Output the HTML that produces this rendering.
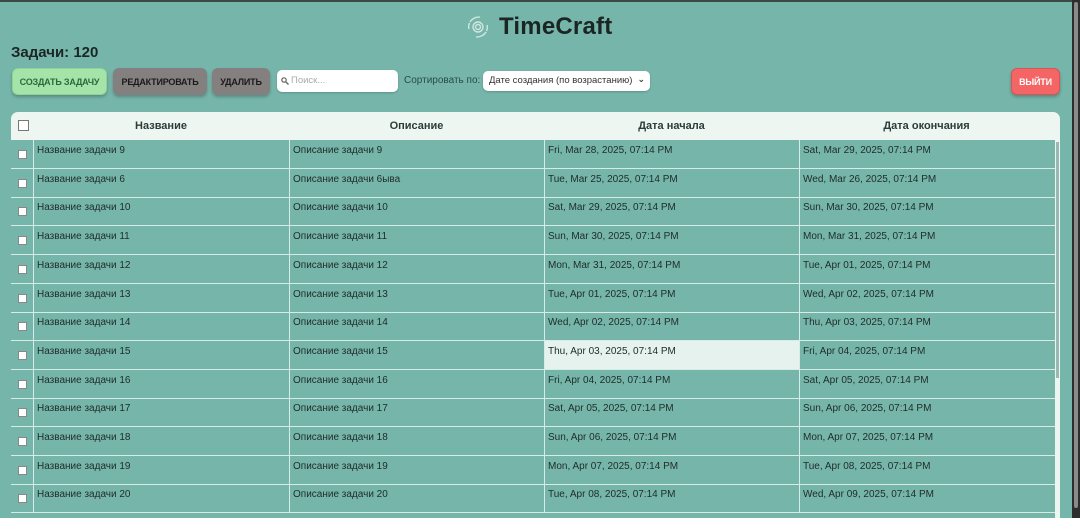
<!DOCTYPE html>
<html><head><meta charset="utf-8"><style>
*{box-sizing:border-box;margin:0;padding:0}
body{width:1080px;height:518px;overflow:hidden;background:#76b6aa;font-family:"Liberation Sans","DejaVu Sans",sans-serif;color:#1f2b29;position:relative}
.topbar{position:absolute;left:0;top:0;width:1080px;height:2px;background:#3a4a47}
.rbar{position:absolute;left:1072px;top:0;width:8px;height:518px;background:#2d2d2d}
.rbar i{position:absolute;left:2px;top:2px;width:4px;height:506px;background:#8a8a8a;border-radius:2px}
.logo{position:absolute;left:465px;top:13px;display:flex;align-items:center}
.logo span{font-weight:bold;font-size:24px;color:#1b2624;margin-left:8px;letter-spacing:0.2px}
h1{position:absolute;left:11px;top:44px;font-size:15px;font-weight:bold;color:#1b2624}
.btn{position:absolute;top:68px;height:27px;border-radius:6px;font-size:9px;font-weight:bold;display:flex;align-items:center;justify-content:center;box-shadow:0 2px 3px rgba(0,0,0,.25);letter-spacing:-0.2px}
.search{position:absolute;left:277px;top:70px;width:121px;height:22px;background:#fff;border-radius:5px;font-size:9.5px;color:#aaa;padding-left:14px;line-height:22px;box-shadow:0 1px 2px rgba(0,0,0,.2)}
.lbl{position:absolute;left:404px;top:75px;font-size:10px;color:#2c4a45}
.sel{position:absolute;left:483px;top:71px;width:167px;height:20px;background:#fff;border-radius:5px;font-size:9.5px;color:#333;line-height:20px;padding-left:6px;box-shadow:0 1px 2px rgba(0,0,0,.2)}
.tw{position:absolute;left:11px;top:112px;width:1049px;height:406px}
.hd{position:absolute;left:0;top:0;width:1049px;height:28px;background:#eef6f2;border-radius:7px 7px 0 0}
.hd div{position:absolute;top:8px;font-size:11px;font-weight:bold;color:#2b3d3a;text-align:center}
.row{position:absolute;left:0;width:1044px;height:29px;border-bottom:1.5px solid #d6ece7}
.c{position:absolute;top:0;height:100%;border-left:1.5px solid #d6ece7;font-size:10px;padding:5px 0 0 3px;color:#1f2b29}
.cb{position:absolute;left:7px;top:10px;width:9px;height:9px;background:#fff;border:1px solid #888}
.sb{position:absolute;left:1044px;top:28px;width:5px;height:378px;background:#eef6f2}
.sb i{position:absolute;left:1px;top:2px;width:3px;height:236px;background:#9cb8b2}
</style></head><body>
<div class="topbar"></div>
<div class="rbar"><i></i></div>
<div class="logo"><svg width="26" height="26" viewBox="0 0 26 26" fill="none" stroke="#cfe6e0" stroke-width="1.4"><circle cx="13" cy="13" r="5"/><circle cx="13" cy="13" r="2.5"/><path d="M5 8 A10 10 0 0 1 15 3.2"/><path d="M21 18 A10 10 0 0 1 11 22.8"/><path d="M4 15 A9 9 0 0 1 4.5 9"/><path d="M22 11 A9 9 0 0 1 21.5 17"/></svg><span>TimeCraft</span></div>
<h1>Задачи: 120</h1>
<div class="btn" style="left:12px;width:95px;background:#a4e4a8;color:#2b6a3c;border:1px solid #8fd494">СОЗДАТЬ ЗАДАЧУ</div>
<div class="btn" style="left:113px;width:94px;background:#858080;color:#1a1a1a">РЕДАКТИРОВАТЬ</div>
<div class="btn" style="left:212px;width:58px;background:#858080;color:#1a1a1a">УДАЛИТЬ</div>
<div class="search"><svg style="position:absolute;left:4px;top:7px" width="8" height="8" viewBox="0 0 8 8"><circle cx="3" cy="3" r="2.2" fill="none" stroke="#666" stroke-width="1.2"/><path d="M4.6 4.6 7.5 7.5" stroke="#666" stroke-width="1.4"/></svg>Поиск...</div>
<div class="lbl">Сортировать по:</div>
<div class="sel">Дате создания (по возрастанию)<span style="position:absolute;right:5px;top:-2px;font-size:9px;font-weight:bold">⌄</span></div>
<div class="btn" style="left:1011px;width:49px;background:#f46566;color:#fff;border:1px solid #d95555">ВЫЙТИ</div>
<div class="tw">
<div class="hd"><div style="left:7px;top:8px;width:11px;height:11px;background:#fff;border:1px solid #777"></div><div style="left:22px;width:256px">Название</div><div style="left:278px;width:255px">Описание</div><div style="left:533px;width:255px">Дата начала</div><div style="left:788px;width:255px">Дата окончания</div></div>
<div id="rows"></div>
<div class="sb"><i></i></div>
</div>
<script>
var d=[["9","9","Fri, Mar 28","Sat, Mar 29"],["6","6ыва","Tue, Mar 25","Wed, Mar 26"],["10","10","Sat, Mar 29","Sun, Mar 30"],["11","11","Sun, Mar 30","Mon, Mar 31"],["12","12","Mon, Mar 31","Tue, Apr 01"],["13","13","Tue, Apr 01","Wed, Apr 02"],["14","14","Wed, Apr 02","Thu, Apr 03"],["15","15","Thu, Apr 03","Fri, Apr 04"],["16","16","Fri, Apr 04","Sat, Apr 05"],["17","17","Sat, Apr 05","Sun, Apr 06"],["18","18","Sun, Apr 06","Mon, Apr 07"],["19","19","Mon, Apr 07","Tue, Apr 08"],["20","20","Tue, Apr 08","Wed, Apr 09"]];
var h="";d.forEach(function(r,i){var t=28+i*28.7;h+='<div class="row" style="top:'+t+'px"><div class="cb"></div><div class="c" style="left:22px;width:256px">Название задачи '+r[0]+'</div><div class="c" style="left:278px;width:255px">Описание задачи '+r[1]+'</div><div class="c" style="left:533px;width:255px;'+(i==7?'background:#e6f2ee':'')+'">'+r[2]+', 2025, 07:14 PM</div><div class="c" style="left:788px;width:256px">'+r[3]+', 2025, 07:14 PM</div></div>';});
document.getElementById("rows").innerHTML=h;
</script>
</body></html>
